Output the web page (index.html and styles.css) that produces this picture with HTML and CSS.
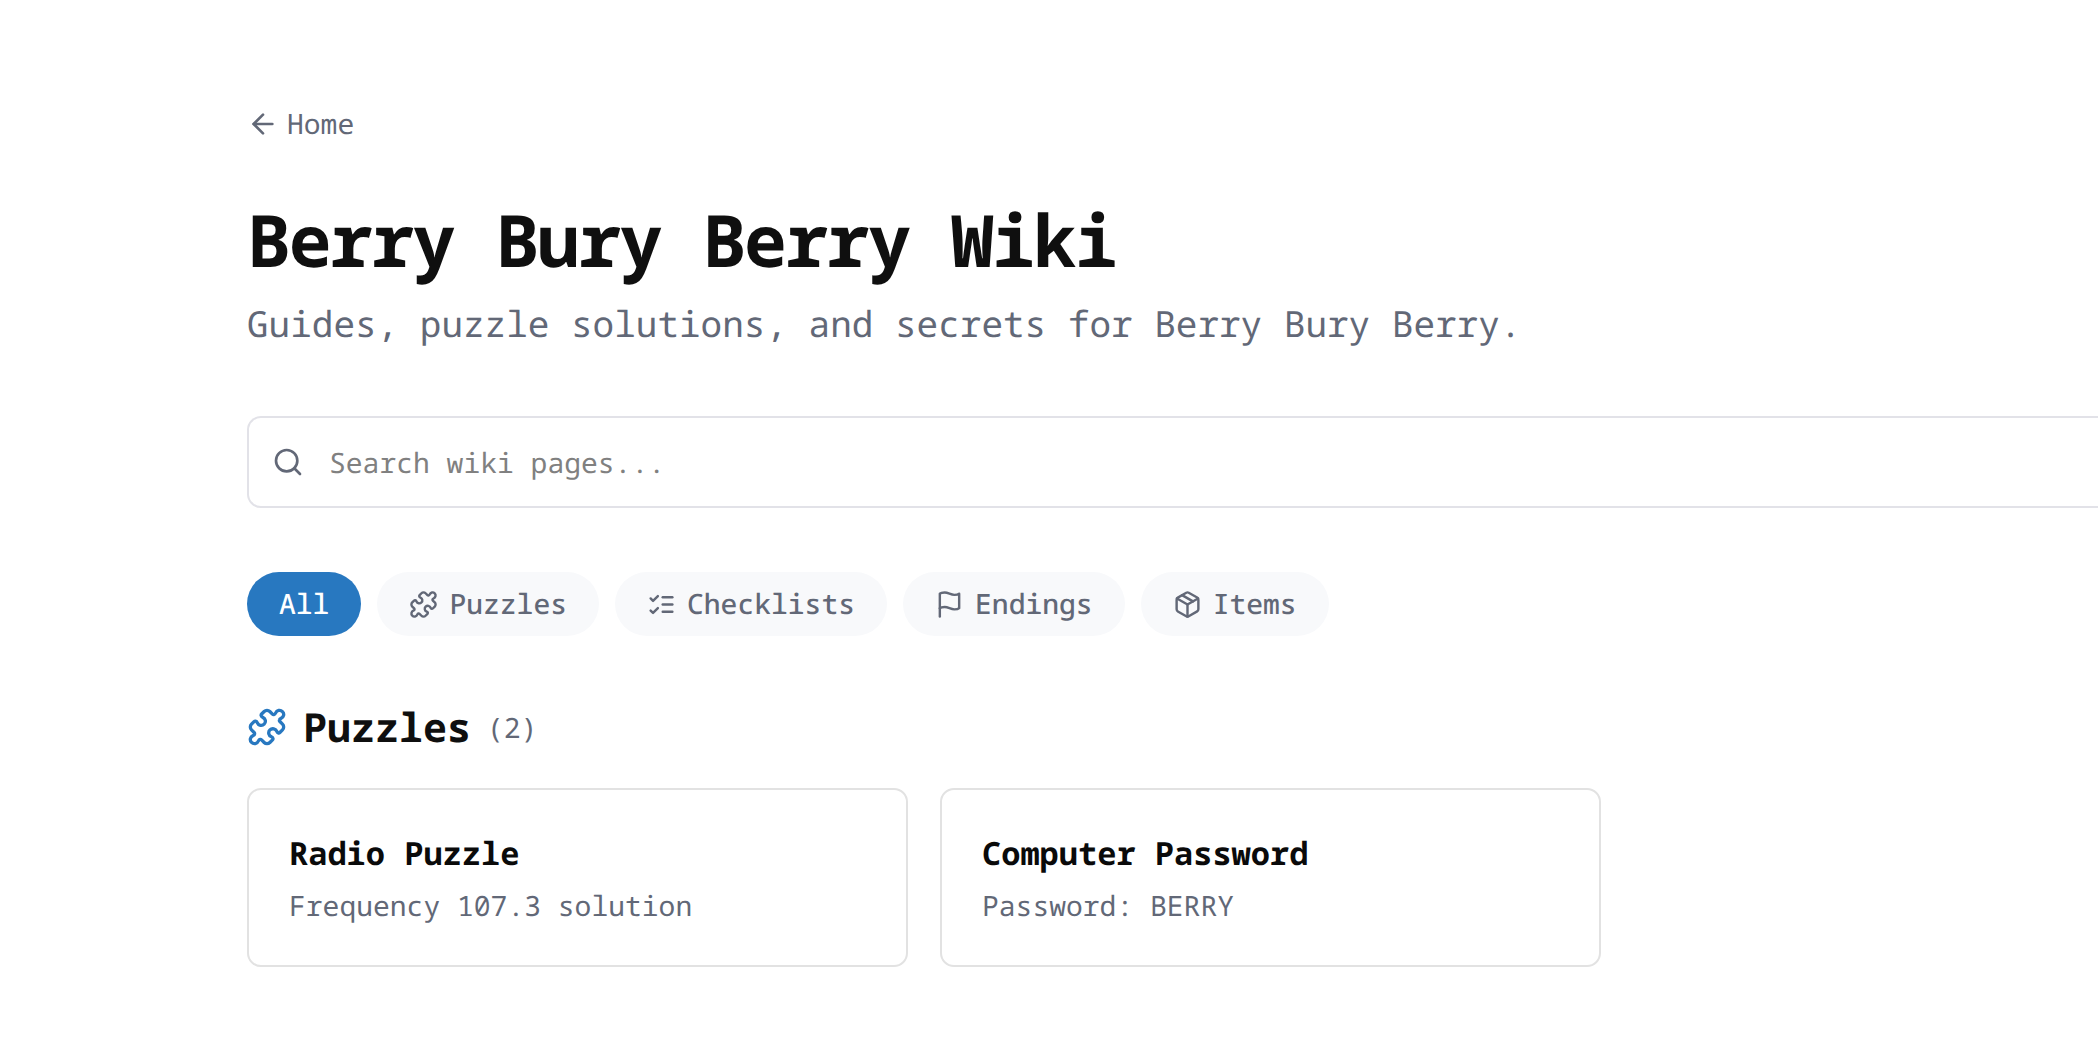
FILE: index.html
```html
<!DOCTYPE html>
<html lang="en">
<head>
  <meta charset="UTF-8" />
  <meta name="viewport" content="width=device-width, initial-scale=1.0"/>
  <title>Berry Bury Berry Wiki</title>
  <link rel="stylesheet" href="styles.css">
</head>
<body>
  <div class="container">
    <a class="back-link" href="#">
      <svg class="icon" viewBox="0 0 24 24"><path d="m12 19-7-7 7-7"/><path d="M19 12H5"/></svg>
      Home
    </a>

    <h1>Berry Bury Berry Wiki</h1>
    <p class="subtitle">Guides, puzzle solutions, and secrets for Berry Bury Berry.</p>

    <div class="search">
      <svg class="icon" viewBox="0 0 24 24"><circle cx="11" cy="11" r="8"/><path d="m21 21-4.3-4.3"/></svg>
      <input type="text" placeholder="Search wiki pages..." />
    </div>

    <div class="filters">
      <button type="button" class="pill active">All</button>
      <button type="button" class="pill">
        <svg class="icon" viewBox="0 0 24 24"><path d="M19.439 7.85c-.049.322.059.648.289.878l1.568 1.568c.47.47.706 1.087.706 1.704s-.235 1.233-.706 1.704l-1.611 1.611a.98.98 0 0 1-.837.276c-.47-.07-.802-.48-.968-.925a2.501 2.501 0 1 0-3.214 3.214c.446.166.855.497.925.968a.979.979 0 0 1-.276.837l-1.61 1.61a2.404 2.404 0 0 1-1.705.707 2.402 2.402 0 0 1-1.704-.706l-1.568-1.568a1.026 1.026 0 0 0-.877-.29c-.493.074-.84.504-1.02.968a2.5 2.5 0 1 1-3.237-3.237c.464-.18.894-.527.967-1.02a1.026 1.026 0 0 0-.289-.877l-1.568-1.568A2.402 2.402 0 0 1 1.998 12c0-.617.236-1.234.706-1.704L4.23 8.77c.24-.24.581-.353.917-.303.515.077.877.528 1.073 1.01a2.5 2.5 0 1 0 3.259-3.259c-.482-.196-.933-.558-1.01-1.073-.05-.336.062-.676.303-.917l1.525-1.525A2.402 2.402 0 0 1 12 1.998c.617 0 1.234.236 1.704.706l1.568 1.568c.23.23.556.338.877.29.493-.074.84-.504 1.02-.968a2.5 2.5 0 1 1 3.237 3.237c-.464.18-.894.527-.967 1.02Z"/></svg>
        Puzzles
      </button>
      <button type="button" class="pill">
        <svg class="icon" viewBox="0 0 24 24"><path d="m3 17 2 2 4-4"/><path d="m3 7 2 2 4-4"/><path d="M13 6h8"/><path d="M13 12h8"/><path d="M13 18h8"/></svg>
        Checklists
      </button>
      <button type="button" class="pill">
        <svg class="icon" viewBox="0 0 24 24"><path d="M4 15s1-1 4-1 5 2 8 2 4-1 4-1V3s-1 1-4 1-5-2-8-2-4 1-4 1z"/><path d="M4 22v-7"/></svg>
        Endings
      </button>
      <button type="button" class="pill">
        <svg class="icon" viewBox="0 0 24 24"><path d="M21 8a2 2 0 0 0-1-1.73l-7-4a2 2 0 0 0-2 0l-7 4A2 2 0 0 0 3 8v8a2 2 0 0 0 1 1.73l7 4a2 2 0 0 0 2 0l7-4A2 2 0 0 0 21 16Z"/><path d="m3.3 7 8.7 5 8.7-5"/><path d="M12 22V12"/><path d="m7.5 4.27 9 5.15"/></svg>
        Items
      </button>
    </div>

    <div class="section-head">
      <svg class="icon" viewBox="0 0 24 24"><path d="M19.439 7.85c-.049.322.059.648.289.878l1.568 1.568c.47.47.706 1.087.706 1.704s-.235 1.233-.706 1.704l-1.611 1.611a.98.98 0 0 1-.837.276c-.47-.07-.802-.48-.968-.925a2.501 2.501 0 1 0-3.214 3.214c.446.166.855.497.925.968a.979.979 0 0 1-.276.837l-1.61 1.61a2.404 2.404 0 0 1-1.705.707 2.402 2.402 0 0 1-1.704-.706l-1.568-1.568a1.026 1.026 0 0 0-.877-.29c-.493.074-.84.504-1.02.968a2.5 2.5 0 1 1-3.237-3.237c.464-.18.894-.527.967-1.02a1.026 1.026 0 0 0-.289-.877l-1.568-1.568A2.402 2.402 0 0 1 1.998 12c0-.617.236-1.234.706-1.704L4.23 8.77c.24-.24.581-.353.917-.303.515.077.877.528 1.073 1.01a2.5 2.5 0 1 0 3.259-3.259c-.482-.196-.933-.558-1.01-1.073-.05-.336.062-.676.303-.917l1.525-1.525A2.402 2.402 0 0 1 12 1.998c.617 0 1.234.236 1.704.706l1.568 1.568c.23.23.556.338.877.29.493-.074.84-.504 1.02-.968a2.5 2.5 0 1 1 3.237 3.237c-.464.18-.894.527-.967 1.02Z"/></svg>
      <h2>Puzzles</h2>
      <span class="count">(2)</span>
    </div>

    <div class="cards">
      <a class="card" href="#">
        <h3>Radio Puzzle</h3>
        <p>Frequency 107.3 solution</p>
      </a>
      <a class="card" href="#">
        <h3>Computer Password</h3>
        <p>Password: BERRY</p>
      </a>
    </div>
  </div>
</body>
</html>
```

FILE: styles.css
```css
* {
  box-sizing: border-box;
}
body {
  margin: 0;
  background: #fff;
  color: #0f0f0f;
  font-family: "Noto Sans Mono", "DejaVu Sans Mono", monospace;
  text-rendering: geometricPrecision;
}
a {
  color: inherit;
  text-decoration: none;
}
.container {
  padding: 104px 0 0 247px;
}
.icon {
  width: 29px;
  height: 29px;
  fill: none;
  stroke: currentColor;
  stroke-width: 2;
  stroke-linecap: round;
  stroke-linejoin: round;
  flex-shrink: 0;
}
.back-link {
  display: inline-flex;
  align-items: center;
  gap: 8px;
  color: #626877;
  font-size: 28px;
  line-height: 40px;
}
.back-link .icon,
.search .icon {
  width: 32px;
  height: 32px;
}
h1 {
  margin: 53px 0 0;
  font-size: 72px;
  font-weight: 700;
  letter-spacing: -1.8px;
  line-height: 84px;
}
.subtitle {
  margin: 17px 0 0;
  color: #626877;
  font-size: 36px;
  line-height: 50px;
}
.search {
  display: flex;
  align-items: center;
  gap: 25px;
  height: 92px;
  margin-top: 67px;
  padding: 0 23px;
  border: 2px solid #e2e2e8;
  border-right: none;
  border-radius: 14px 0 0 14px;
  color: #626877;
}
.search input {
  flex: 1;
  padding: 2px 0 0;
  border: none;
  outline: none;
  font-family: inherit;
  font-size: 28px;
  text-rendering: geometricPrecision;
}
.search input::placeholder {
  color: #808080;
}
.filters {
  display: flex;
  gap: 16px;
  margin-top: 64px;
}
.pill {
  display: flex;
  align-items: center;
  gap: 11px;
  height: 64px;
  padding: 0 32px;
  border: none;
  border-radius: 32px;
  background: #f8f9fb;
  color: #626877;
  font-family: inherit;
  font-size: 28px;
  font-weight: 500;
  text-rendering: geometricPrecision;
}
.pill.active {
  background: #2878c0;
  color: #fff;
}
.section-head {
  display: flex;
  align-items: center;
  gap: 16px;
  margin-top: 66px;
}
.section-head .icon {
  width: 40px;
  height: 40px;
  color: #2878c0;
}
h2 {
  margin: 0;
  font-size: 40px;
  font-weight: 700;
  line-height: 50px;
}
.count {
  padding-top: 2px;
  color: #626877;
  font-size: 28px;
}
.cards {
  display: grid;
  grid-template-columns: repeat(2, 661px);
  gap: 32px;
  margin-top: 36px;
}
.card {
  display: block;
  padding: 42px 40px 38px;
  border: 2px solid #e2e2e2;
  border-radius: 14px;
}
h3 {
  margin: 0;
  color: #0a0a0a;
  font-size: 32px;
  font-weight: 700;
  line-height: 44px;
}
.card p {
  margin: 9px 0 0;
  color: #626877;
  font-size: 28px;
  line-height: 42px;
}
```
